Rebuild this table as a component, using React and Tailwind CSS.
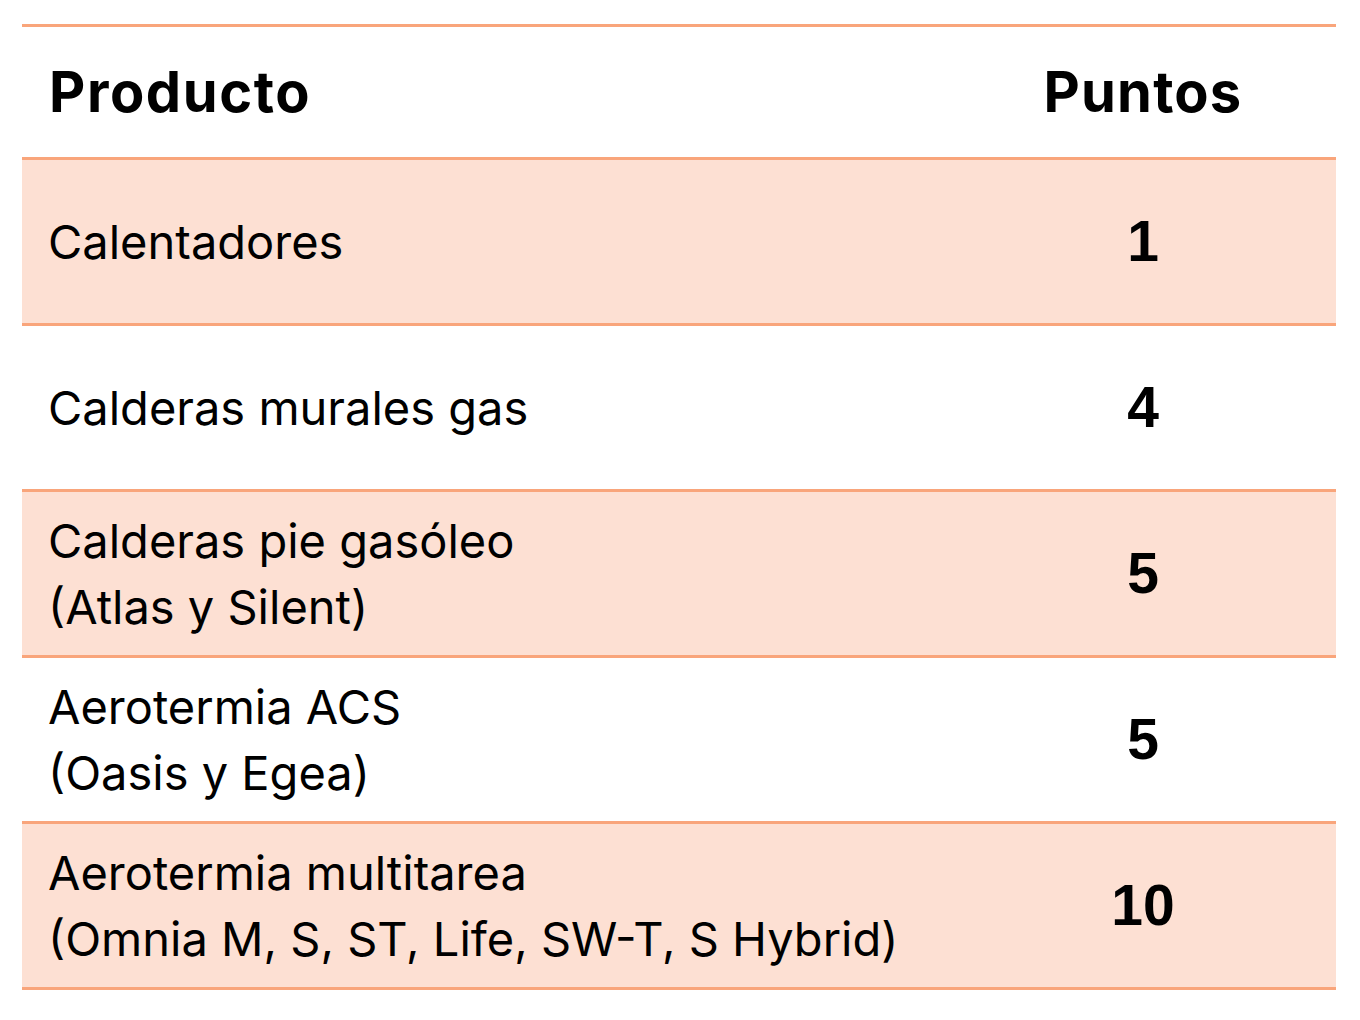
import React from 'react';

const rows = [
  { lines: ['Calentadores'], pts: '1', shaded: true },
  { lines: ['Calderas murales gas'], pts: '4', shaded: false },
  { lines: ['Calderas pie gasóleo', '(Atlas y Silent)'], pts: '5', shaded: true },
  { lines: ['Aerotermia ACS', '(Oasis y Egea)'], pts: '5', shaded: false },
  { lines: ['Aerotermia multitarea', '(Omnia M, S, ST, Life, SW-T, S Hybrid)'], pts: '10', shaded: true },
];

const App = () => {
  return (
    <div className="w-[1360px] h-[1020px] bg-white pt-[24px] pl-[22px]" style={{ fontFamily: 'Inter, "Noto Sans", sans-serif' }}>
      <div className="w-[1314px] border-t-[3px] border-[#f9a57b]">
        <div className="flex h-[133px] items-center border-b-[3px] border-[#f9a57b]">
          <div className="flex-1 pl-[27px] text-[56px] font-bold text-black tracking-[1.6px]">Producto</div>
          <div className="w-[386px] text-center text-[56px] font-bold text-black tracking-[1.2px]">Puntos</div>
        </div>
        {rows.map((r, i) => (
          <div
            key={i}
            className={`flex h-[166px] items-center border-b-[3px] border-[#f9a57b] ${r.shaded ? 'bg-[#fde0d3]' : 'bg-white'}`}
          >
            <div className="flex-1 pl-[26px] text-[47px] leading-[66px] text-black">
              {r.lines.map((l, j) => (
                <div key={j}>{l}</div>
              ))}
            </div>
            <div className="w-[386px] text-center text-[57px] font-bold text-black" style={{ fontFamily: '"Liberation Sans", Arial, sans-serif' }}>
              {r.pts}
            </div>
          </div>
        ))}
      </div>
    </div>
  );
};

export default App;
